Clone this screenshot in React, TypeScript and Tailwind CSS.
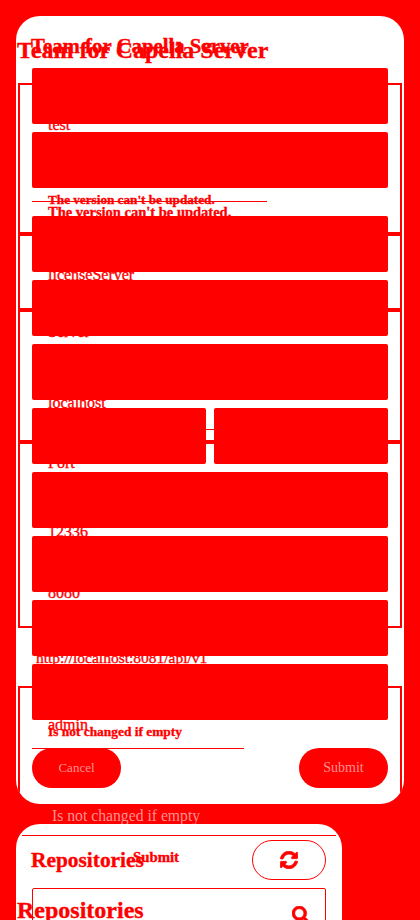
import { FaSearch, FaSyncAlt } from "react-icons/fa";

const serif = "font-['Liberation_Serif',serif]";

function Field({ value, textTop = "top-[45px]" }: { value?: string; textTop?: string }) {
  return (
    <div className="relative h-14 rounded-[2px] bg-[#f00]">
      {value && <span className={`absolute left-4 text-base leading-6 whitespace-nowrap text-[#f00] ${textTop}`}>{value}</span>}
    </div>
  );
}

export default function App() {
  return (
    <div className={`h-[920px] overflow-hidden bg-[#f00] px-4 pt-4 text-[#f00] [-webkit-text-stroke-width:0.35px] ${serif}`}>
      {/* first card */}
      <div className="relative h-[788px] w-[388px] overflow-hidden rounded-3xl bg-white px-4 pt-[52px]">
        {/* section outlines behind the fields */}
        <div className="pointer-events-none absolute left-[2px] right-[2px] top-[67px] flex flex-col">
          <div className="h-[151px] border-2 border-[#f00]" />
          <div className="h-[76px] border-2 border-[#f00]" />
          <div className="h-[132px] border-2 border-[#f00]" />
          <div className="h-[186px] border-2 border-[#f00]" />
        </div>
        <div className="pointer-events-none absolute -bottom-6 left-[2px] right-[2px] top-[670px] border-2 border-[#f00]" />

        <h1 className="absolute left-[15px] top-[18px] text-[20.8px] font-bold leading-6 whitespace-nowrap">Team for Capella Server</h1>
        <h1 className="absolute left-[1px] top-[20px] text-2xl font-bold leading-7 whitespace-nowrap">Team for Capella Server</h1>

        <div className="relative flex flex-col gap-2">
          <Field value="test" />
          <div className="mb-5">
            <Field />
          </div>
          <Field value="licenseServer" textTop="top-[47px]" />
          <Field value="Server" textTop="top-[40px]" />
          <Field value="localhost" textTop="top-[47px]" />
          <div className="grid grid-cols-2 gap-2">
            <Field value="Port" textTop="top-[43px]" />
            <Field />
          </div>
          <Field value="12336" textTop="top-[48px]" />
          <Field value="8080" />
          <div className="relative h-14 rounded-[2px] bg-[#f00]">
            <span className="absolute left-1 top-[46px] text-[15.500px] leading-6 whitespace-nowrap">http://localhost:8081/api/v1</span>
          </div>
          <Field value="admin" textTop="top-[49px]" />
        </div>

        <p className="absolute left-8 top-[176px] text-[13.2px] font-bold leading-4 whitespace-nowrap">The version can't be updated.</p>
        <p className="absolute left-8 top-[186px] text-[14.5px] font-bold leading-5 whitespace-nowrap">The version can't be updated.</p>
        <div className="absolute left-4 top-[185px] h-px w-[235px] bg-[#f00]" />
        <div className="absolute left-4 top-[413px] h-px w-[182px] bg-[#f00]" />
        <p className="absolute left-8 top-[708px] text-[13.4px] font-bold leading-4 whitespace-nowrap">Is not changed if empty</p>
        <div className="absolute left-4 top-[732px] h-px w-[212px] bg-[#f00]" />

        <div className="mt-7 flex justify-between [-webkit-text-stroke-width:0]">
          <button className="h-10 w-[89px] rounded-full bg-[#f00] text-[13px] text-[#ff9090]">Cancel</button>
          <button className="h-10 w-[89px] rounded-full bg-[#f00] text-sm text-[#ff9090]">Submit</button>
        </div>
      </div>

      <p className="absolute left-[52px] top-[806px] text-[15.7px] leading-5 whitespace-nowrap text-[#ff9090] [-webkit-text-stroke-width:0]">Is not changed if empty</p>

      {/* second card */}
      <div className="relative mt-5 h-[200px] w-[326px] rounded-3xl bg-white px-4 pt-4">
        <div className="absolute left-[6px] right-[6px] top-[11px] h-px bg-[#f00]" />
        <div className="flex h-10 items-center justify-between">
          <h2 className="-ml-px text-[21.4px] font-bold leading-6 whitespace-nowrap">Repositories</h2>
          <button className="flex h-10 w-[74px] items-center justify-center rounded-full border border-[#f00]">
            <FaSyncAlt size={18} strokeWidth={24} />
          </button>
        </div>
        <span className="absolute left-[117px] top-[23px] text-[14.8px] font-bold leading-5">Submit</span>
        <div className="relative mt-2 h-[120px] rounded-[2px] border border-[#f00]">
          <FaSearch size={18} strokeWidth={16} className="absolute right-[15px] top-[17px]" />
        </div>
        <h2 className="absolute left-[1px] top-[72px] text-2xl font-bold leading-7 whitespace-nowrap">Repositories</h2>
      </div>
    </div>
  );
}
